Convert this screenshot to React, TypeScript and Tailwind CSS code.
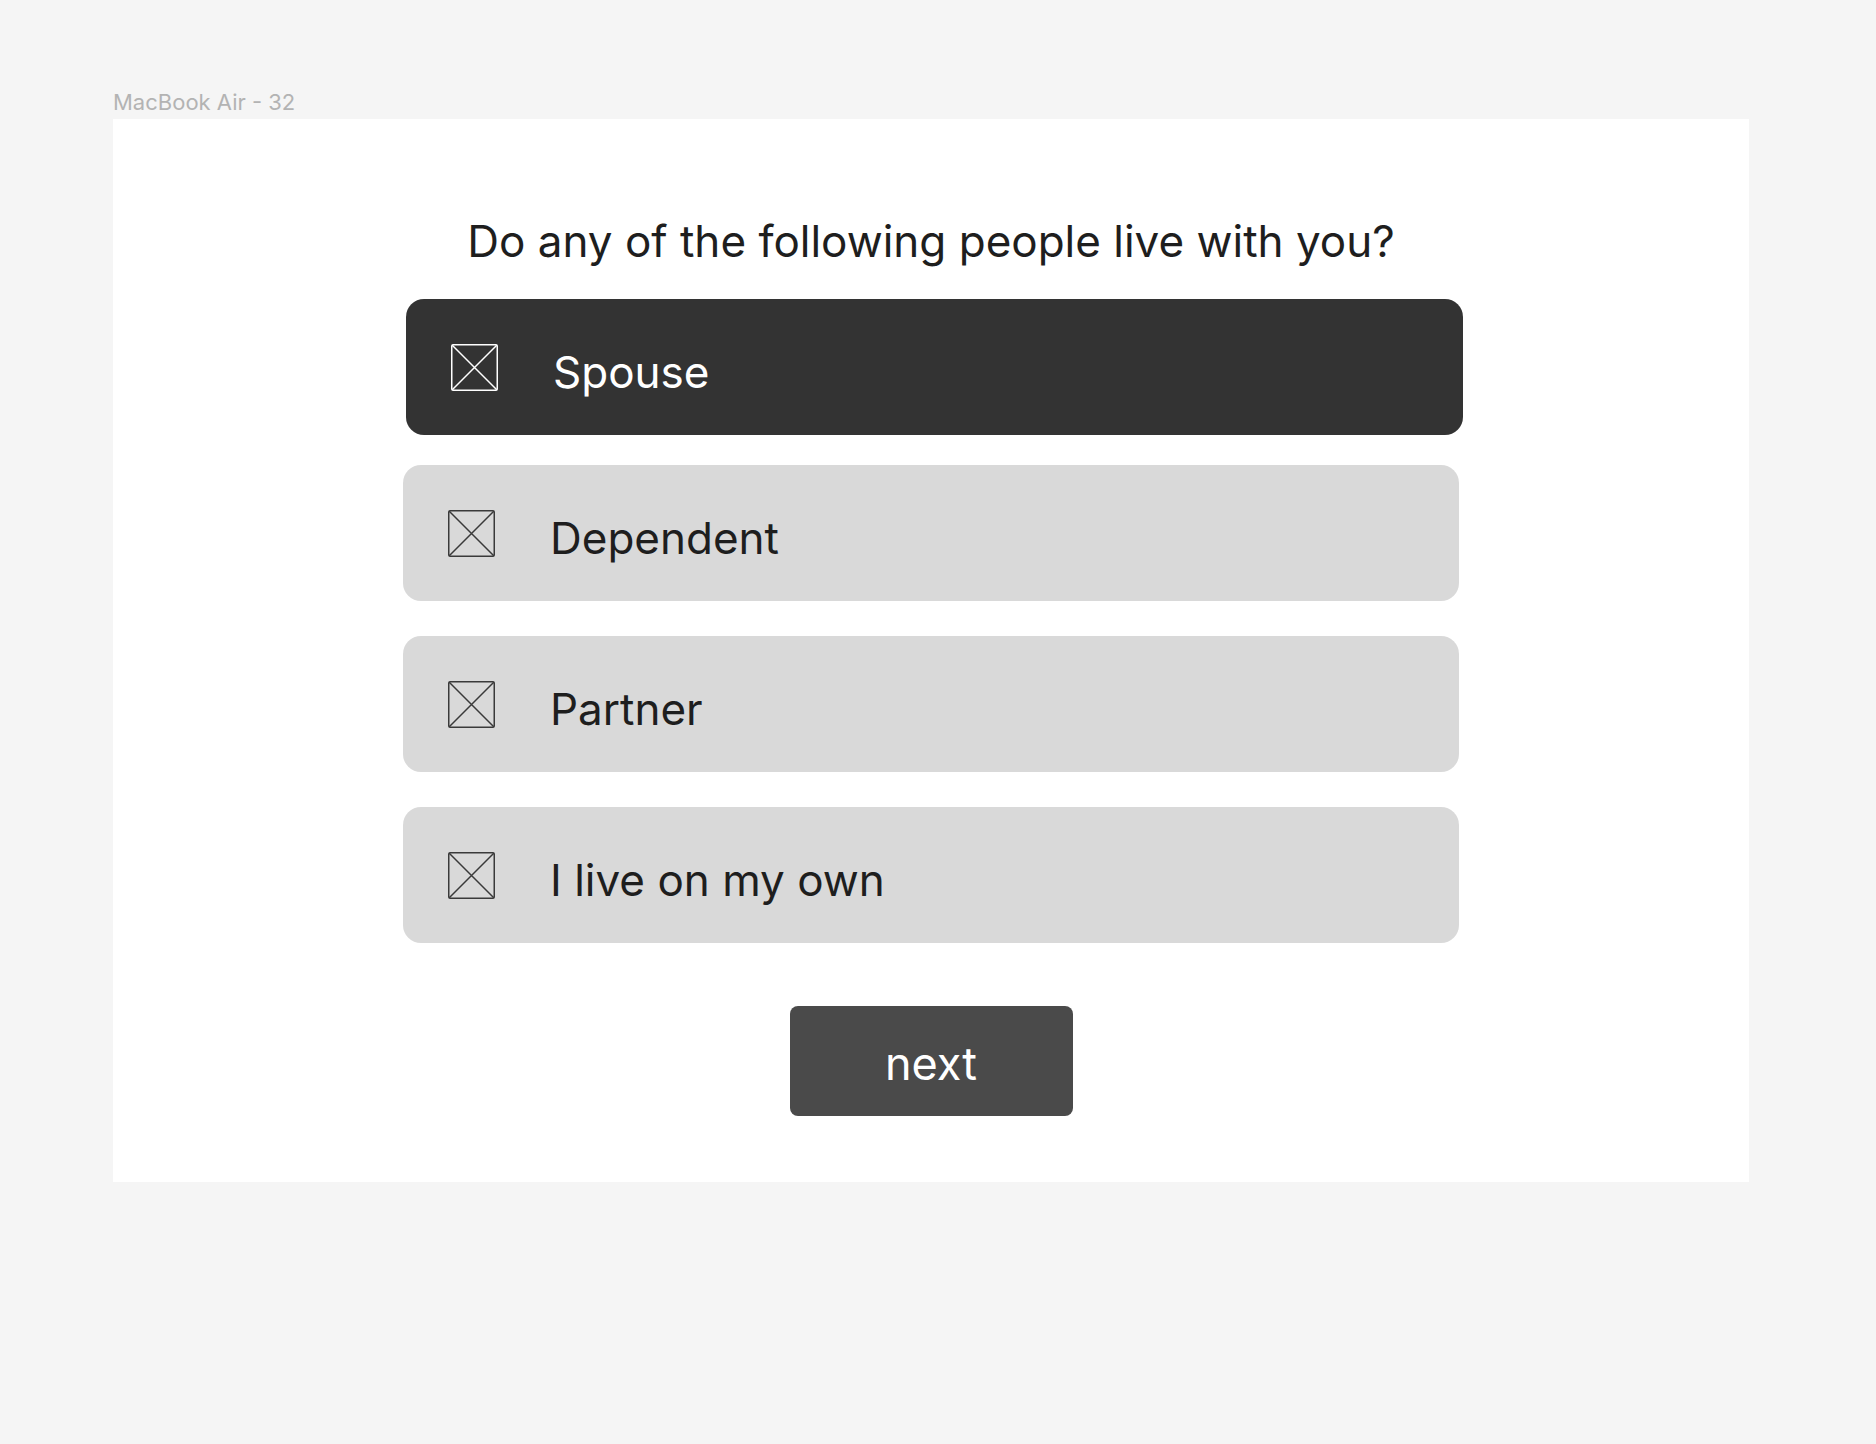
const options = [
  { label: "Spouse", selected: true },
  { label: "Dependent", selected: false },
  { label: "Partner", selected: false },
  { label: "I live on my own", selected: false },
];

function CrossBox({ light }: { light: boolean }) {
  const color = light ? "#ffffff" : "#3a3a3a";
  return (
    <svg width="47" height="47" viewBox="0 0 47 47" fill="none" className="shrink-0">
      <rect x="0.75" y="0.75" width="45.5" height="45.5" rx="1.5" stroke={color} strokeWidth="1.5" />
      <path d="M1 1 L46 46 M46 1 L1 46" stroke={color} strokeWidth="1.5" />
    </svg>
  );
}

export default function App() {
  return (
    <main
      className="min-h-screen bg-[#f5f5f5] pt-[89px] pl-[113px]"
      style={{ fontFamily: "Inter, 'Noto Sans', sans-serif" }}
    >
      <p className="text-[22px] leading-[26px] text-[#b3b3b3] mb-[4px]">MacBook Air - 32</p>

      <div className="w-[1636px] h-[1063px] bg-white flex flex-col items-center pt-[96px]">
        <h1 className="text-[44px] leading-[52px] text-[#1e1e1e] text-center">
          Do any of the following people live with you?
        </h1>

        <div className="w-[1056px] mt-[32px] flex flex-col">
          {options.map((opt, i) => (
            <div
              key={opt.label}
              className={`h-[136px] rounded-[18px] flex items-center pl-[45px] ${
                opt.selected
                  ? "bg-[#333333] text-white w-[1057px] ml-[3px]"
                  : "bg-[#d9d9d9] text-[#1e1e1e] w-[1056px]"
              } ${i === 0 ? "" : i === 1 ? "mt-[30px]" : "mt-[35px]"}`}
            >
              <CrossBox light={opt.selected} />
              <span className="ml-[55px] mt-[10px] text-[44px] leading-[56px]">{opt.label}</span>
            </div>
          ))}
        </div>

        <button className="mt-[63px] w-[283px] h-[110px] rounded-[8px] bg-[#4a4a4a] text-white text-[45px] leading-[56px] pt-[5px]">
          next
        </button>
      </div>
    </main>
  );
}
